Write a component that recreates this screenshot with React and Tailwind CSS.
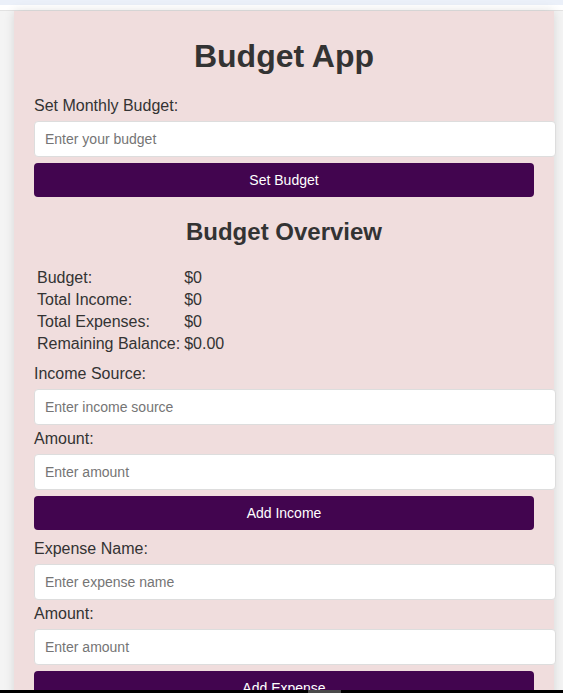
import React, { useState } from "react";

const Field = ({ label, placeholder, value, onChange, first }) => (
    <div className={first ? "" : "mt-[5px]"}>
        <label className="block text-base leading-[18px] text-[#333]">{label}</label>
        <input
            type="text"
            value={value}
            onChange={(e) => onChange(e.target.value)}
            placeholder={placeholder}
            className="mt-[6px] block h-[36px] w-[calc(100%+22px)] rounded-[4px] border border-[#ddd] bg-white px-[10px] text-sm text-[#333] placeholder:text-[#757575] outline-none"
        />
    </div>
);

const Button = ({ children, onClick }) => (
    <button
        onClick={onClick}
        className="mt-[6px] block h-[34px] w-full rounded-[4px] bg-[#42054f] text-sm text-white"
    >
        {children}
    </button>
);

export default function App() {
    const [budgetInput, setBudgetInput] = useState("");
    const [budget, setBudget] = useState(0);
    const [incomeSource, setIncomeSource] = useState("");
    const [incomeAmount, setIncomeAmount] = useState("");
    const [expenseName, setExpenseName] = useState("");
    const [expenseAmount, setExpenseAmount] = useState("");
    const [income, setIncome] = useState(0);
    const [expenses, setExpenses] = useState(0);

    const remaining = budget + income - expenses;

    const rows = [
        ["Budget:", `$${budget}`],
        ["Total Income:", `$${income}`],
        ["Total Expenses:", `$${expenses}`],
        ["Remaining Balance:", `$${remaining.toFixed(2)}`],
    ];

    return (
        <div className="min-h-screen bg-[#f4f4f4] font-['Liberation_Sans',Arial,sans-serif]">
            <div className="h-[5px] bg-[#ebf0f9]" />
            <div className="h-[6px] border-b border-[#e2e2e2] bg-white" />
            <div className="ml-[14px] w-[540px] bg-[#f0dddd] px-[20px] pb-[40px] pt-[27px] shadow-[0_0_10px_rgba(0,0,0,0.12)]">
                <h1 className="text-center text-[32px] font-bold leading-[37px] text-[#333]">Budget App</h1>

                <div className="mt-[22px]">
                    <Field first label="Set Monthly Budget:" placeholder="Enter your budget" value={budgetInput} onChange={setBudgetInput} />
                    <Button onClick={() => setBudget(Number(budgetInput) || 0)}>Set Budget</Button>
                </div>

                <h2 className="mt-[21px] text-center text-2xl font-bold leading-[28px] text-[#333]">Budget Overview</h2>

                <div className="mt-[21px] grid grid-cols-[auto_1fr] gap-x-[4px] pl-[3px] text-base leading-[22px] text-[#333]">
                    {rows.map(([k, v]) => (
                        <React.Fragment key={k}>
                            <span>{k}</span>
                            <span>{v}</span>
                        </React.Fragment>
                    ))}
                </div>

                <div className="mt-[10px]">
                    <Field first label="Income Source:" placeholder="Enter income source" value={incomeSource} onChange={setIncomeSource} />
                    <Field label="Amount:" placeholder="Enter amount" value={incomeAmount} onChange={setIncomeAmount} />
                    <Button onClick={() => setIncome(income + (Number(incomeAmount) || 0))}>Add Income</Button>
                </div>

                <div className="mt-[10px]">
                    <Field first label="Expense Name:" placeholder="Enter expense name" value={expenseName} onChange={setExpenseName} />
                    <Field label="Amount:" placeholder="Enter amount" value={expenseAmount} onChange={setExpenseAmount} />
                    <Button onClick={() => setExpenses(expenses + (Number(expenseAmount) || 0))}>Add Expense</Button>
                </div>
            </div>

            <div className="fixed bottom-0 left-0 right-0 h-[3px] bg-black">
                <div className="ml-[308px] h-full w-[33px] bg-[#4a4a4a]" />
            </div>
        </div>
    );
}
